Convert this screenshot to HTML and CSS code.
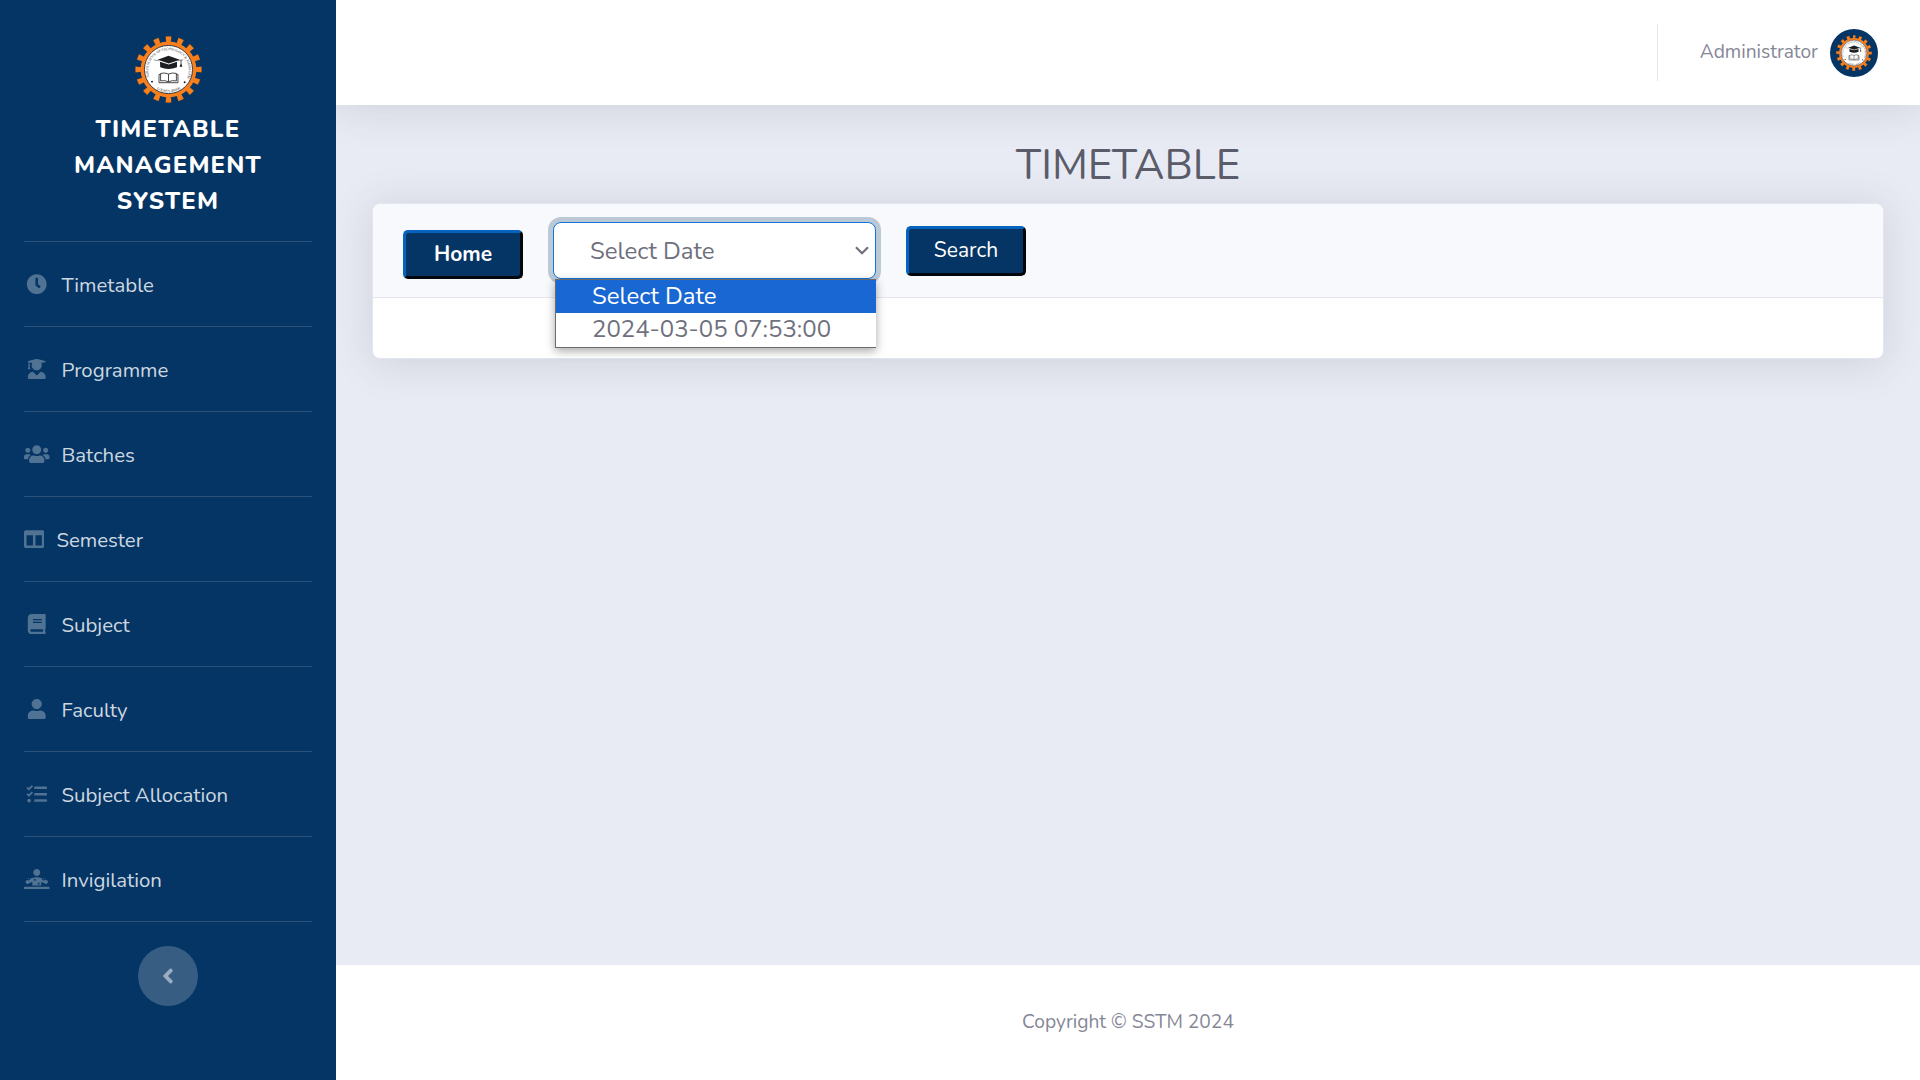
FILE: index.html
```html
<!DOCTYPE html>
<html lang="en">
<head>
<meta charset="utf-8">
<title>Timetable Management System</title>
<link rel="stylesheet" href="styles.css">
</head>
<body>
<svg width="0" height="0" class="defs" aria-hidden="true">
  <defs>
    <path id="arc-top" d="M16.5 43.6A20.6 20.6 0 1 1 55.5 43.6"/>
    <path id="arc-bottom" d="M19.5 52A23 23 0 0 0 52.5 52"/>
    <symbol id="crest" viewBox="0 0 72 72">
      <circle cx="36" cy="36" r="30.6" fill="none" stroke="#5c4838" stroke-width="6.6" pathLength="160" stroke-dasharray="4.9 5.1" stroke-dashoffset="2.45" transform="rotate(-90 36 36)"/>
      <circle cx="36" cy="36" r="30.4" fill="none" stroke="#f77f1e" stroke-width="6" pathLength="160" stroke-dasharray="4.3 5.7" stroke-dashoffset="2.15" transform="rotate(-90 36 36)"/>
      <circle cx="36" cy="36" r="28.3" fill="#f77f1e"/>
      <circle cx="36" cy="36" r="24.4" fill="#fff" stroke="#3a3a3c" stroke-width="1"/>
      <text class="crest-text"><textPath href="#arc-top" textLength="86">SURYA SCHOOL OF TECHNOLOGY &amp; MANAGEMENT</textPath></text>
      <text class="crest-text"><textPath href="#arc-bottom" startOffset="6" textLength="25">LOUREY-388306</textPath></text>
      <circle cx="19.3" cy="48.3" r="1" fill="#222"/>
      <circle cx="52.4" cy="49" r="1" fill="#222"/>
      <path fill="#1d1e22" d="M25 26 36 22 47.5 26 36.3 30zM27.3 28.2 36.3 31 44.6 28.2V33.8Q36 37.2 27.6 33.8zM48.3 26.2h.8v4l1 3h-2.8l1-3z"/>
      <path fill="none" stroke="#555" stroke-width=".6" d="M21 26.2 26 27.2M45 27.2 51 26.2"/>
      <path fill="#fff" stroke="#333" stroke-width=".9" d="M36 40.6Q32 38.8 28 40V47.6Q32 46.6 36 48.4 40 46.6 44 47.6V40Q40 38.8 36 40.6zV48.4M28 41H26.4V49.4H45.6V41H44"/>
    </symbol>
  </defs>
</svg>

<div class="wrapper">
  <nav class="sidebar">
    <a class="brand">
      <svg class="brand-logo"><use href="#crest"/></svg>
      <span class="brand-name">Timetable Management System</span>
    </a>
    <ul class="nav">
      <li><a class="nav-link"><svg class="icon" viewBox="-64 0 640 512"><path d="M256,8C119,8,8,119,8,256S119,504,256,504,504,393,504,256,393,8,256,8Zm92.49,313h0l-20,25a16,16,0,0,1-22.49,2.5h0l-67-49.72a40,40,0,0,1-15-31.23V112a16,16,0,0,1,16-16h32a16,16,0,0,1,16,16V256l58,42.5A16,16,0,0,1,348.49,321Z"/></svg><span>Timetable</span></a></li>
      <li><a class="nav-link"><svg class="icon" viewBox="-96 0 640 512"><path d="M319.4 320.6L224 416l-95.4-95.4C57.1 323.7 0 382.2 0 454.4v9.6c0 26.5 21.5 48 48 48h352c26.5 0 48-21.5 48-48v-9.6c0-72.2-57.1-130.7-128.6-133.8zM13.6 79.8l6.4 1.5v58.4c-7 4.2-12 11.5-12 20.3 0 8.4 4.6 15.4 11.1 19.7L3.5 242c-1.7 6.9 2.1 14 7.6 14h41.8c5.5 0 9.3-7.1 7.6-14l-15.6-62.3C51.4 175.4 56 168.4 56 160c0-8.8-5-16.1-12-20.3V87.1l66 15.9c-8.6 17.2-14 36.4-14 57 0 70.7 57.3 128 128 128s128-57.3 128-128c0-20.6-5.3-39.8-14-57l96.3-23.2c18.2-4.4 18.2-27.1 0-31.5l-190.4-46c-13-3.1-26.7-3.1-39.7 0L13.6 48.2c-18.1 4.4-18.1 27.2 0 31.6z"/></svg><span>Programme</span></a></li>
      <li><a class="nav-link"><svg class="icon" viewBox="0 0 640 512"><path d="M96 224c35.3 0 64-28.7 64-64s-28.7-64-64-64-64 28.7-64 64 28.7 64 64 64zm448 0c35.3 0 64-28.7 64-64s-28.7-64-64-64-64 28.7-64 64 28.7 64 64 64zm32 32h-64c-17.6 0-33.5 7.1-45.1 18.6 40.3 22.1 68.9 62 75.1 109.4h66c17.7 0 32-14.3 32-32v-32c0-35.3-28.7-64-64-64zm-256 0c61.9 0 112-50.1 112-112S381.9 32 320 32 208 82.1 208 144s50.1 112 112 112zm76.8 32h-8.3c-20.8 10-43.9 16-68.5 16s-47.6-6-68.5-16h-8.3C179.6 288 128 339.6 128 403.2V432c0 26.5 21.5 48 48 48h288c26.5 0 48-21.5 48-48v-28.8c0-63.6-51.6-115.2-115.2-115.2zm-223.7-13.4C161.5 263.1 145.6 256 128 256H64c-35.3 0-64 28.7-64 64v32c0 17.7 14.3 32 32 32h65.9c6.3-47.4 34.9-87.3 75.2-109.4z"/></svg><span>Batches</span></a></li>
      <li><a class="nav-link"><svg class="icon icon-narrow" viewBox="0 0 512 512"><path d="M464 32H48C21.49 32 0 53.49 0 80v352c0 26.51 21.49 48 48 48h416c26.51 0 48-21.49 48-48V80c0-26.51-21.49-48-48-48zM224 416H64V160h160v256zm224 0H288V160h160v256z"/></svg><span>Semester</span></a></li>
      <li><a class="nav-link"><svg class="icon" viewBox="-96 0 640 512"><path d="M448 360V24c0-13.3-10.7-24-24-24H96C43 0 0 43 0 96v320c0 53 43 96 96 96h328c13.3 0 24-10.7 24-24v-16c0-7.5-3.5-14.3-8.9-18.7-4.2-15.4-4.2-59.3 0-74.7 5.4-4.3 8.9-11.1 8.9-18.6zM128 134c0-3.3 2.7-6 6-6h212c3.3 0 6 2.7 6 6v20c0 3.3-2.7 6-6 6H134c-3.3 0-6-2.7-6-6v-20zm0 64c0-3.3 2.7-6 6-6h212c3.3 0 6 2.7 6 6v20c0 3.3-2.7 6-6 6H134c-3.3 0-6-2.7-6-6v-20zm253.4 250H96c-17.7 0-32-14.3-32-32 0-17.6 14.4-32 32-32h285.4c-1.9 17.1-1.9 46.9 0 64z"/></svg><span>Subject</span></a></li>
      <li><a class="nav-link"><svg class="icon" viewBox="-96 0 640 512"><path d="M224 256c70.7 0 128-57.3 128-128S294.7 0 224 0 96 57.3 96 128s57.3 128 128 128zm89.6 32h-16.7c-22.2 10.2-46.9 16-72.9 16s-50.6-5.8-72.9-16h-16.7C60.2 288 0 348.2 0 422.4V464c0 26.5 21.5 48 48 48h352c26.5 0 48-21.5 48-48v-41.6c0-74.2-60.2-134.4-134.4-134.4z"/></svg><span>Faculty</span></a></li>
      <li><a class="nav-link"><svg class="icon" viewBox="-64 0 640 512"><path d="M139.61 35.5a12 12 0 0 0-17 0L58.93 98.81l-22.7-22.12a12 12 0 0 0-17 0L3.53 92.41a12 12 0 0 0 0 17l47.59 47.4a12.78 12.78 0 0 0 17.61 0l15.59-15.62L156.52 69a12.09 12.09 0 0 0 .09-17zm0 159.19a12 12 0 0 0-17 0l-63.68 63.72-22.7-22.1a12 12 0 0 0-17 0L3.53 252a12 12 0 0 0 0 17L51 316.5a12.77 12.77 0 0 0 17.6 0l15.7-15.69 72.2-72.22a12 12 0 0 0 .09-16.9zM64 368c-26.49 0-48.59 21.5-48.59 48S37.53 464 64 464a48 48 0 0 0 0-96zm432 16H208a16 16 0 0 0-16 16v32a16 16 0 0 0 16 16h288a16 16 0 0 0 16-16v-32a16 16 0 0 0-16-16zm0-320H208a16 16 0 0 0-16 16v32a16 16 0 0 0 16 16h288a16 16 0 0 0 16-16V80a16 16 0 0 0-16-16zm0 160H208a16 16 0 0 0-16 16v32a16 16 0 0 0 16 16h288a16 16 0 0 0 16-16v-32a16 16 0 0 0-16-16z"/></svg><span>Subject Allocation</span></a></li>
      <li><a class="nav-link"><svg class="icon" viewBox="0 0 640 512"><path d="M496 256c8.8 0 16-7.2 16-16s-7.2-16-16-16-16 7.2-16 16 7.2 16 16 16zm-176-80c48.5 0 88-39.5 88-88S368.5 0 320 0s-88 39.5-88 88 39.5 88 88 88zM59.8 364c10.2 15.3 29.3 17.8 42.9 9.8 16.2-9.6 56.2-31.7 105.3-48.6V416h224v-90.7c49.1 16.8 89.1 39 105.3 48.6 13.6 8 32.7 5.3 42.9-9.8l17.8-26.7c8.8-13.2 7.6-34.6-10-45.1-11.9-7.1-29.7-17-51.1-27.4-28.1 46.1-99.4 17.8-87.7-35.1C409.3 217.2 365.1 208 320 208c-57 0-112.9 14.5-160 32.2-.2 40.2-47.6 63.3-79.2 36-11.2 6-21.3 11.6-28.7 16-17.6 10.5-18.8 31.8-10 45.1L59.8 364zM368 344c13.3 0 24 10.7 24 24s-10.7 24-24 24-24-10.7-24-24 10.7-24 24-24zm-96-96c13.3 0 24 10.7 24 24s-10.7 24-24 24-24-10.7-24-24 10.7-24 24-24zm-160 8c8.8 0 16-7.2 16-16s-7.2-16-16-16-16 7.2-16 16 7.2 16 16 16zm512 192H16c-8.8 0-16 7.2-16 16v32c0 8.8 7.2 16 16 16h608c8.8 0 16-7.2 16-16v-32c0-8.8-7.2-16-16-16z"/></svg><span>Invigilation</span></a></li>
    </ul>
    <button class="collapse" aria-label="Collapse sidebar"><svg viewBox="0 0 256 512"><path d="M31.7 239l136-136c9.4-9.4 24.6-9.4 33.9 0l22.6 22.6c9.4 9.4 9.4 24.6 0 33.9L127.9 256l96.4 96.4c9.4 9.4 9.4 24.6 0 33.9L201.7 409c-9.4 9.4-24.6 9.4-33.9 0l-136-136c-9.5-9.4-9.5-24.6-.1-34z"/></svg></button>
  </nav>

  <div class="content">
    <header class="topbar">
      <div class="topbar-divider"></div>
      <span class="user-name">Administrator</span>
      <span class="avatar"><svg><use href="#crest"/></svg></span>
    </header>

    <main class="main">
      <h1 class="title">TIMETABLE</h1>
      <section class="card">
        <div class="card-header">
          <button class="btn btn-home">Home</button>
          <div class="select">
            <div class="select-box">
              <span>Select Date</span>
              <svg class="chevron" viewBox="0 0 14 9"><path d="M1 1.2 7 7.2 13 1.2"/></svg>
            </div>
            <ul class="options">
              <li class="option active">Select Date</li>
              <li class="option">2024-03-05 07:53:00</li>
            </ul>
          </div>
          <button class="btn btn-search">Search</button>
        </div>
        <div class="card-body"></div>
      </section>
    </main>

    <footer class="footer">Copyright © SSTM 2024</footer>
  </div>
</div>
</body>
</html>
```
FILE: styles.css
```css
* {
  box-sizing: border-box;
}

body {
  margin: 0;
  font-family: Nunito, Lato, sans-serif;
  font-size: 24px;
  line-height: 36px;
  color: #858796;
  background: #fff;
}

ul {
  list-style: none;
  margin: 0;
  padding: 0;
}

button {
  font-family: inherit;
}

.defs {
  position: absolute;
}

.wrapper {
  display: flex;
  height: 1080px;
  overflow: hidden;
}

/* Sidebar */
.sidebar {
  position: relative;
  z-index: 1;
  width: 336px;
  flex: none;
  padding: 34px 24px 0;
  background: #053564;
  display: flex;
  flex-direction: column;
  align-items: center;
}

.brand {
  width: 100%;
  height: 208px;
  display: flex;
  flex-direction: column;
  align-items: center;
  border-bottom: 1px solid #2b527a;
}

.brand-logo {
  width: 71px;
  height: 71px;
  margin-bottom: 6px;
}

.brand-name {
  width: 240px;
  color: #fff;
  font-weight: 800;
  text-align: center;
  text-transform: uppercase;
  letter-spacing: 1.2px;
}

.crest-text {
  font: 3.6px "Liberation Serif", serif;
  fill: #333;
}

.nav {
  width: 100%;
}

.nav-link {
  display: flex;
  align-items: center;
  height: 85px;
  border-bottom: 1px solid #2b527a;
  color: #cdd7e0;
  font-size: 20.4px;
}

.nav-link span {
  padding-top: 2px;
}

.icon {
  width: 25.5px;
  height: 20.4px;
  margin-right: 12px;
  fill: #507293;
}

.icon-narrow {
  width: 20.4px;
}

.collapse {
  width: 60px;
  height: 60px;
  margin-top: 24px;
  padding: 0 1px 0 0;
  border: 0;
  border-radius: 50%;
  background: #375d83;
}

.collapse svg {
  display: block;
  width: 12px;
  height: 24px;
  margin: 0 auto;
  fill: #9baec1;
}

/* Content */
.content {
  flex: 1;
  display: flex;
  flex-direction: column;
  background: #e8ebf4;
}

.topbar {
  height: 105px;
  flex: none;
  display: flex;
  align-items: center;
  justify-content: flex-end;
  padding-right: 42px;
  background: #fff;
  box-shadow: 0 3.6px 42px rgba(58, 59, 69, .15);
}

.topbar-divider {
  width: 1px;
  height: 57px;
  margin-right: 42px;
  background: #e3e6f0;
}

.user-name {
  font-size: 19.2px;
  margin-right: 12px;
  padding-bottom: 2px;
}

.avatar {
  width: 48px;
  height: 48px;
  border-radius: 50%;
  background: #053564;
  display: flex;
  align-items: center;
  justify-content: center;
}

.avatar svg {
  width: 38px;
  height: 38px;
}

.main {
  flex: 1;
  padding: 36px 36px 0;
}

.title {
  margin: 0 0 12px;
  font-size: 42px;
  line-height: 50px;
  font-weight: 400;
  text-align: center;
  color: #5a5c69;
}

.card {
  border: 1px solid #e3e6f0;
  border-radius: 8px;
  background: #fff;
  box-shadow: 0 3.6px 42px rgba(58, 59, 69, .15);
}

.card-header {
  height: 94px;
  display: flex;
  align-items: flex-start;
  padding: 18px 30px 0;
  background: #f8f9fc;
  border-bottom: 1px solid #e3e6f0;
  border-radius: 7px 7px 0 0;
}

.card-body {
  height: 60px;
}

.btn {
  width: 120px;
  padding: 0;
  border: 3px solid;
  border-color: #0563bd #02070d #02070d #0563bd;
  border-radius: 5px;
  background: #053564;
  color: #fff;
  font-size: 21px;
}

.btn-home {
  height: 49px;
  margin-top: 8px;
  padding-bottom: 1px;
  font-weight: 700;
}

.btn-search {
  height: 50px;
  margin-top: 4px;
  padding-bottom: 2px;
}

.select {
  position: relative;
  width: 323px;
  margin: 0 30px;
}

.select-box {
  height: 57px;
  display: flex;
  align-items: center;
  justify-content: space-between;
  padding: 0 6px 0 36px;
  border: 1px solid #1276d8;
  border-radius: 8px;
  background: #fff;
  box-shadow: 0 0 0 5px #bbc9d7;
  color: #6e707e;
}

.chevron {
  width: 14px;
  height: 9px;
  fill: none;
  stroke: #6e707e;
  stroke-width: 2.2;
}

.options {
  position: absolute;
  top: 57px;
  left: 2px;
  right: 0;
  z-index: 2;
  border: 1px solid #6b6b6b;
  border-right: 0;
  background: #fff;
  box-shadow: 0 3px 9px rgba(0, 0, 0, .35);
}

.option {
  height: 34px;
  padding-left: 36px;
  line-height: 33px;
  color: #6e707e;
}

.option.active {
  height: 33px;
  background: #1967d2;
  color: #fff;
}

.footer {
  height: 115px;
  background: #fff;
  font-size: 19.2px;
  line-height: 115px;
  text-align: center;
}
```
